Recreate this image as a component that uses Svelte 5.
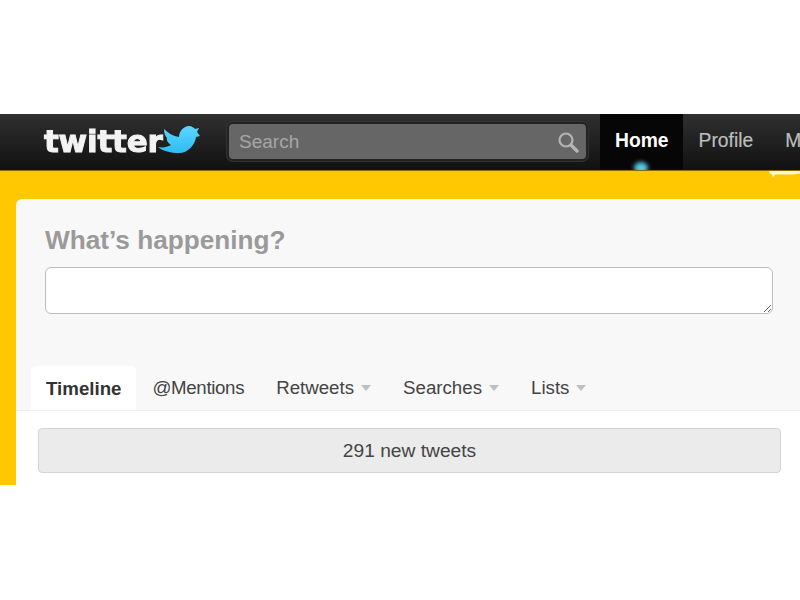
<script>
  const tabs = [
    { label: 'Timeline', active: true },
    { label: '@Mentions', tight: true },
    { label: 'Retweets', menu: true },
    { label: 'Searches', menu: true },
    { label: 'Lists', menu: true }
  ];
</script>

<div class="shot">
  <header class="topbar">
    <div class="logo">
      <span class="wordmark">twitter</span>
      <svg class="bird" viewBox="0 0 42 32" width="42" height="32" aria-hidden="true">
        <defs>
          <linearGradient id="birdfill" x1="0" y1="0" x2="0" y2="1">
            <stop offset="0" stop-color="#5fd6ff" />
            <stop offset="1" stop-color="#2cbcf2" />
          </linearGradient>
        </defs>
        <path fill="url(#birdfill)" d="M6 4C10 8 15 11 21 12C21 6 26 1 31 1C34 1 36 3 37 4L41 3L39 7L42 11L38 12C37 20 30 28 21 28C13 28 5 26 0 22C5 23 9 22 13 20C10 18 8 15 9 13C7 11 6 8 6 4Z" />
      </svg>
    </div>
    <div class="search">
      <span>Search</span>
      <svg viewBox="0 0 22 22" width="22" height="22" aria-hidden="true">
        <circle cx="9" cy="9" r="6.5" fill="none" stroke="#b4b4b4" stroke-width="2.2" />
        <path d="M14 14l6 6" stroke="#b4b4b4" stroke-width="3.4" stroke-linecap="round" />
      </svg>
    </div>
    <nav class="nav">
      <a class="current" href="#home">Home<i class="glow"></i></a>
      <a href="#profile">Profile</a>
      <a href="#messages">Messages</a>
    </nav>
  </header>

  <main class="stage">
    <svg class="scrap" viewBox="0 0 31 8" width="31" height="8" aria-hidden="true">
      <path fill="#fff6d4" d="M0 0H31V2.5C22 4 12 3.5 6 3.5L4 7L3 3.5C1 3 0 2 0 0Z" />
    </svg>
    <section class="panel">
      <div class="composer">
        <h2>What’s happening?</h2>
        <textarea></textarea>
      </div>
      <ul class="tabs">
        {#each tabs as tab}
          <li class:active={tab.active} class:tight={tab.tight}>
            {tab.label}{#if tab.menu}<i class="caret"></i>{/if}
          </li>
        {/each}
      </ul>
      <div class="stream">
        <div class="new-tweets">291 new tweets</div>
      </div>
    </section>
  </main>
</div>

<style>
  :global(body) {
    background: #fff;
    overflow: hidden;
  }
  .shot {
    padding-top: 114px;
    font-family: "Liberation Sans", Arial, sans-serif;
  }
  .topbar {
    height: 57px;
    display: flex;
    align-items: stretch;
    background: linear-gradient(#303030, #111);
    box-sizing: border-box;
    border-bottom: 1px solid #8a6d00;
    overflow: hidden;
  }
  .logo {
    width: 227px;
    padding-left: 44px;
    box-sizing: border-box;
    display: flex;
    align-items: center;
    flex: none;
  }
  .wordmark {
    font: bold 31px "DejaVu Sans", sans-serif;
    color: #f3f3f3;
    letter-spacing: -0.2px;
    -webkit-text-stroke: 1px #f3f3f3;
    margin-top: -3px;
    filter: blur(0.4px);
  }
  .bird {
    margin: -2px 0 0 -5px;
    flex: none;
  }
  .search {
    width: 361px;
    height: 39px;
    margin-top: 8px;
    margin-right: 12px;
    box-sizing: border-box;
    border: 2px solid #222;
    border-radius: 6px;
    background: #666;
    box-shadow: 0 0 0 1px #333;
    display: flex;
    align-items: center;
    justify-content: space-between;
    padding: 0 7px 0 10px;
    color: #a6a6a6;
    font-size: 19px;
    flex: none;
  }
  .nav {
    display: flex;
    flex: none;
    font-size: 19.3px;
  }
  .nav a {
    position: relative;
    color: #bdbdbd;
    text-decoration: none;
    padding: 16px 16px 0;
    -webkit-text-stroke: 0.2px #bdbdbd;
  }
  .nav a.current {
    background: #060606;
    color: #fff;
    font-weight: bold;
    padding: 16px 14px 0 15px;
    -webkit-text-stroke: 0;
  }
  .glow {
    position: absolute;
    left: 34px;
    bottom: -4px;
    width: 14px;
    height: 12px;
    border-radius: 50%;
    background: #58c8e4;
    filter: blur(2px);
  }
  .stage {
    position: relative;
    height: 314px;
    padding: 28px 0 0 16px;
    background: #ffc800;
    box-sizing: border-box;
  }
  .scrap {
    position: absolute;
    top: 0;
    right: 0;
    filter: blur(0.5px);
  }
  .panel {
    height: 286px;
    background: #f8f8f8;
    border-radius: 6px 0 0 0;
    display: flex;
    flex-direction: column;
  }
  .composer {
    padding: 26px 27px 0 29px;
    height: 167px;
    box-sizing: border-box;
    flex: none;
  }
  h2 {
    margin: 0 0 12px;
    font-size: 26.2px;
    line-height: 30px;
    font-weight: bold;
    color: #9a9a9a;
  }
  textarea {
    display: block;
    width: 100%;
    height: 47px;
    box-sizing: border-box;
    border: 1px solid #bcbcbc;
    border-radius: 6px;
    background: #fff;
    margin: 0;
  }
  .tabs {
    list-style: none;
    margin: 0;
    padding: 0 0 0 15px;
    display: flex;
    height: 44px;
    flex: none;
    color: #444;
    font-size: 18.7px;
    border-bottom: 1px solid #efefef;
  }
  .tabs li {
    padding: 11px 16px 0;
    line-height: 22px;
    white-space: nowrap;
  }
  .tabs li.tight {
    letter-spacing: -0.35px;
  }
  .tabs li.active {
    background: #fff;
    border-radius: 5px 5px 0 0;
    color: #333;
    font-weight: bold;
    padding: 12px 15px 0;
  }
  .caret {
    display: inline-block;
    margin-left: 7px;
    vertical-align: 3px;
    border: 5.5px solid transparent;
    border-top: 6px solid #c0c0c0;
    border-bottom: 0;
  }
  .stream {
    flex: 1;
    background: #fff;
    padding: 17px 19px 0 22px;
  }
  .new-tweets {
    height: 45px;
    box-sizing: border-box;
    border: 1px solid #d4d4d4;
    border-radius: 4px;
    background: #ebebeb;
    color: #444;
    font-size: 19.2px;
    line-height: 43px;
    text-align: center;
  }
</style>
